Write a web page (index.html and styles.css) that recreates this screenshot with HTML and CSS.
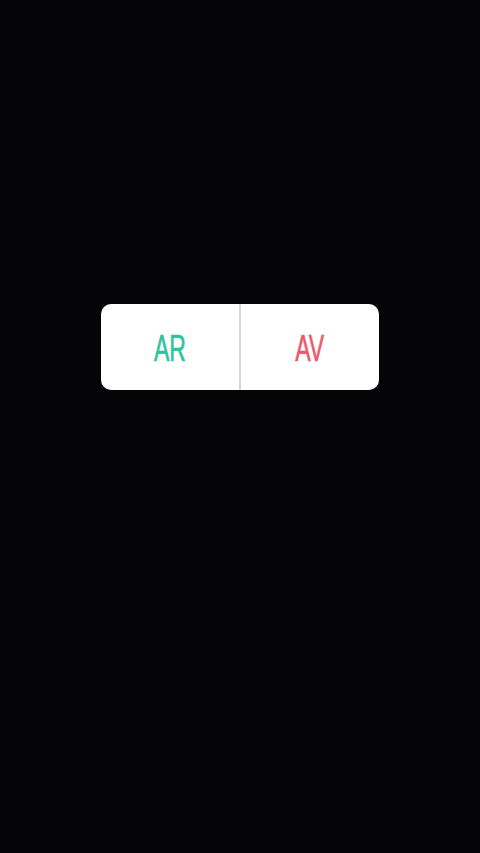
FILE: index.html
```html
<!DOCTYPE html>
<html>
<head>
<meta charset="utf-8">
<link rel="stylesheet" href="styles.css">
</head>
<body>
<main class="screen">
  <div class="poll">
    <div class="option"><span class="label label-ar">AR</span></div>
    <div class="divider"></div>
    <div class="option"><span class="label label-av">AV</span></div>
  </div>
</main>
</body>
</html>
```
FILE: styles.css
```css
html, body {
  margin: 0;
  padding: 0;
  background: #050507;
}
.screen {
  width: 480px;
  height: 853px;
  display: flex;
  justify-content: center;
  padding-top: 304px;
  box-sizing: border-box;
  background: #050507;
}
.poll {
  width: 278px;
  height: 86px;
  background: #ffffff;
  border-radius: 10px;
  display: flex;
  overflow: hidden;
}
.option {
  flex: 1;
  display: flex;
  align-items: center;
  justify-content: center;
}
.divider {
  width: 2px;
  background: #d6d6d6;
}
.label {
  display: inline-block;
  font-family: "Liberation Sans Narrow", "Liberation Sans", sans-serif;
  font-size: 36px;
  line-height: 1;
  transform: scaleX(0.64);
  padding-top: 4px;
  -webkit-text-stroke: 0.6px currentColor;
}
.label-ar { color: #2dc49c; }
.label-av { color: #e95a6c; }
```
